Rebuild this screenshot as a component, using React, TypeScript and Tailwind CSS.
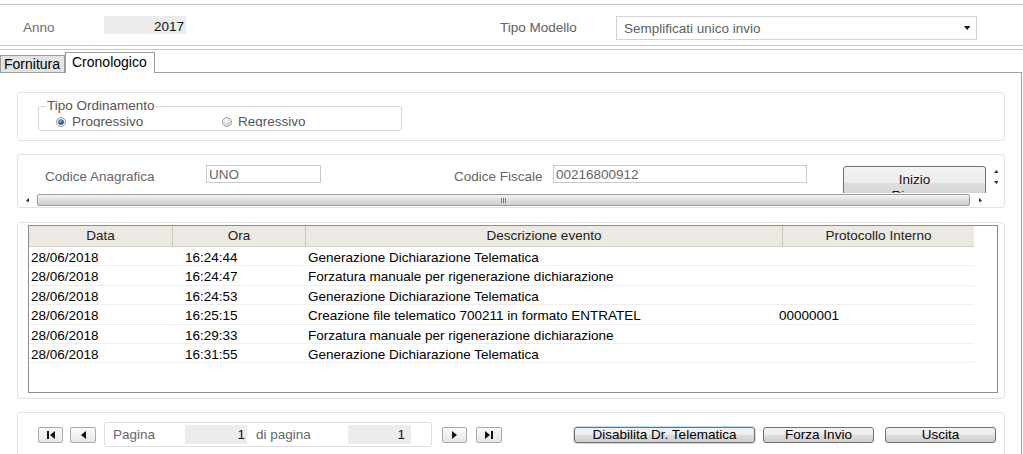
import React from 'react';

const ROWS = [
  ['28/06/2018', '16:24:44', 'Generazione Dichiarazione Telematica', ''],
  ['28/06/2018', '16:24:47', 'Forzatura manuale per rigenerazione dichiarazione', ''],
  ['28/06/2018', '16:24:53', 'Generazione Dichiarazione Telematica', ''],
  ['28/06/2018', '16:25:15', 'Creazione file telematico 700211 in formato ENTRATEL', '00000001'],
  ['28/06/2018', '16:29:33', 'Forzatura manuale per rigenerazione dichiarazione', ''],
  ['28/06/2018', '16:31:55', 'Generazione Dichiarazione Telematica', ''],
];

function Tri({ dir, size = 5, color = '#111' }: { dir: 'l' | 'r' | 'u' | 'd'; size?: number; color?: string }) {
  const pts = {
    l: '5,0 5,8 0,4',
    r: '0,0 0,8 5,4',
    u: '0,5 8,5 4,0',
    d: '0,0 8,0 4,5',
  }[dir];
  const vb = dir === 'l' || dir === 'r' ? '0 0 5 8' : '0 0 8 5';
  const w = dir === 'l' || dir === 'r' ? size : size * 1.6;
  const h = dir === 'l' || dir === 'r' ? size * 1.6 : size;
  return (
    <svg width={w} height={h} viewBox={vb}>
      <polygon points={pts} fill={color} />
    </svg>
  );
}

function Radio({ checked }: { checked?: boolean }) {
  return (
    <svg width="10" height="10" viewBox="0 0 10 10" className="shrink-0">
      <defs>
        <radialGradient id={checked ? 'rOn' : 'rOff'} cx="40%" cy="35%" r="65%">
          <stop offset="0%" stopColor={checked ? '#9cc3e6' : '#ffffff'} />
          <stop offset="60%" stopColor={checked ? '#2c5b86' : '#e2e2e2'} />
          <stop offset="100%" stopColor={checked ? '#1b3a58' : '#c8c8c8'} />
        </radialGradient>
      </defs>
      <circle cx="5" cy="5" r="4.5" fill="#f4f4f4" stroke="#9a9a9a" strokeWidth="1" />
      <circle cx="5" cy="5" r={checked ? 2.8 : 3.2} fill={`url(#${checked ? 'rOn' : 'rOff'})`} />
    </svg>
  );
}

const btn =
  'h-[16px] border border-[#707070] rounded-[3px] bg-[linear-gradient(#f3f3f3_0%,#ebebeb_50%,#dddddd_51%,#cfcfcf_100%)] text-[13.5px] leading-[14px] text-black flex items-center justify-center';

const navBtn =
  'h-[16px] border border-[#a9a9a9] rounded-[2px] bg-[linear-gradient(#fbfbfb,#e6e6e6)] flex items-center justify-center gap-[1px]';

export default function App() {
  return (
    <div className="w-[1023px] h-[454px] overflow-hidden bg-white font-['Liberation_Sans',Arial,sans-serif] text-[13.5px] leading-[16px] text-black">
      {/* header */}
      <div className="mt-[4px] h-[42px] border-y border-[#c6c6c6] flex items-start">
        <span className="ml-[23px] mt-[15px] w-[81px] text-[#707070]">Anno</span>
        <div className="mt-[11px] w-[82px] h-[18px] bg-[#ececec] text-right pr-[2px] leading-[21px] text-[#111]">2017</div>
        <span className="ml-[314px] mt-[15px] w-[116px] text-[#606060]">Tipo Modello</span>
        <div className="mt-[11px] w-[361px] h-[24px] border border-[#d2d2d2] flex items-center pl-[7px] pr-[6px] text-[#606060]">
          <span className="flex-1 pt-[1px]">Semplificati unico invio</span>
          <Tri dir="d" size={4} />
        </div>
      </div>
      <div className="mt-[3px] border-t border-[#c6c6c6]" />

      {/* tabs */}
      <div className="w-[1022px] h-[23px] flex items-end border-b border-[#a0a0a0]">
        <div className="w-[65px] h-[17px] border border-b-0 border-[#9c9c9c] bg-[#e3e3e3] text-[14px] leading-[17px] pl-[3px]">
          Fornitura
        </div>
        <div className="-mb-px w-[90px] h-[21px] border border-b-0 border-[#9c9c9c] bg-white text-[14px] leading-[19px] pl-[6px]">
          Cronologico
        </div>
      </div>

      {/* tab content */}
      <div className="w-[1022px] h-[400px] border-r border-[#a0a0a0] pl-[17px] pr-[16px] pt-[19px]">
        {/* ordinamento */}
        <div className="h-[49px] border border-[#e2e2e2] rounded-[3px]">
          <div className="relative ml-[20px] mt-[13px] w-[364px] h-[25px] border border-[#d8d8d8] rounded-[3px]">
            <span className="absolute left-[7px] top-[-9px] bg-white px-[1px] text-[#555]">Tipo Ordinamento</span>
            <div className="mt-[7px] h-[13px] overflow-hidden flex items-start text-[#555] leading-[15px]">
              <div className="ml-[17px] w-[166px] flex items-start">
                <span className="mt-[3px]"><Radio checked /></span>
                <span className="ml-[6px]">Progressivo</span>
              </div>
              <div className="flex items-start">
                <span className="mt-[3px]"><Radio /></span>
                <span className="ml-[6px]">Regressivo</span>
              </div>
            </div>
          </div>
        </div>

        {/* ricerca */}
        <div className="mt-[13px] h-[54px] border border-[#e2e2e2] rounded-[3px] flex flex-col">
          <div className="h-[38px] flex">
            <div className="flex-1 overflow-hidden pt-[10px]">
              <div className="flex items-start">
                <span className="ml-[27px] mt-[4px] w-[161px] text-[#666]">Codice Anagrafica</span>
                <div className="w-[115px] h-[18px] border border-[#c9c9c9] pl-[2px] leading-[17px] text-[#666]">UNO</div>
                <span className="ml-[133px] mt-[4px] w-[99px] text-[#666]">Codice Fiscale</span>
                <div className="w-[254px] h-[18px] border border-[#c9c9c9] pl-[2px] leading-[17px] text-[#666]">00216800912</div>
                <div className="ml-[36px] mt-[1px] w-[143px] h-[34px] border border-[#707070] rounded-[3px] bg-[linear-gradient(#f3f3f3_0%,#ececec_50%,#dedede_51%,#d2d2d2_100%)] pt-[5px] text-center text-[#111] leading-[16px]">
                  <div>Inizio</div>
                  <div>Ricerca</div>
                </div>
              </div>
              <div className="flex mt-[4px]">
                <div className="ml-[188px] w-[115px] h-[18px] border border-[#c9c9c9]" />
                <div className="ml-[232px] w-[254px] h-[18px] border border-[#c9c9c9]" />
              </div>
            </div>
            <div className="w-[16px] flex flex-col items-center pt-[15px] gap-[8px]">
              <Tri dir="u" size={3} color="#333" />
              <Tri dir="d" size={3} color="#333" />
            </div>
          </div>
          <div className="h-[14px] flex items-center">
            <div className="w-[19px] flex justify-center">
              <Tri dir="l" size={3} color="#333" />
            </div>
            <div className="w-[933px] h-[12px] border border-[#9c9c9c] rounded-[2px] bg-[linear-gradient(#f4f4f4,#dadada_60%,#cdcdcd)] flex items-center justify-center gap-[1px]">
              <span className="w-[1px] h-[5px] bg-[#777]" />
              <span className="w-[1px] h-[5px] bg-[#777]" />
              <span className="w-[1px] h-[5px] bg-[#777]" />
            </div>
            <div className="w-[20px] flex justify-center">
              <Tri dir="r" size={3} color="#333" />
            </div>
          </div>
        </div>

        {/* eventi */}
        <div className="mt-[14px] h-[177px] border border-[#e2e2e2] rounded-[3px] pt-[2px] pl-[10px]">
          <div className="w-[970px] h-[168px] border border-[#8c8c8c]">
            <div className="flex h-[21px] w-[945px] bg-[#ebe9e1] border-b border-[#d6d4cb] text-[#222]">
              <div className="w-[144px] border-r border-[#c9c7be] flex items-center justify-center">Data</div>
              <div className="w-[133px] border-r border-[#c9c7be] flex items-center justify-center">Ora</div>
              <div className="w-[477px] border-r border-[#c9c7be] flex items-center justify-center">Descrizione evento</div>
              <div className="w-[191px] flex items-center justify-center">Protocollo Interno</div>
            </div>
            {ROWS.map((r, i) => (
              <div key={i} className="flex h-[19.4px] w-[945px] border-b border-[#efefef] items-start pt-[3px]">
                <div className="w-[154px] pl-[2px]">{r[0]}</div>
                <div className="w-[123px] pl-[2px]">{r[1]}</div>
                <div className="w-[471px] pl-[2px] whitespace-nowrap">{r[2]}</div>
                <div className="w-[197px] pl-[2px]">{r[3]}</div>
              </div>
            ))}
          </div>
        </div>

        {/* navigazione */}
        <div className="mt-[13px] h-[50px] border border-[#e2e2e2] rounded-[3px]">
          <div className="mt-[9px] h-[25px] flex items-center">
            <button className={`${navBtn} ml-[20px] w-[25px]`}>
              <span className="w-[2px] h-[8px] bg-[#111]" />
              <Tri dir="l" size={5} />
            </button>
            <button className={`${navBtn} ml-[7px] w-[26px]`}>
              <Tri dir="l" size={5} />
            </button>
            <div className="ml-[8px] w-[328px] h-[25px] border border-[#dedede] rounded-[3px] flex items-center text-[#666]">
              <span className="ml-[8px] w-[72px]">Pagina</span>
              <div className="w-[62px] h-[19px] bg-[#ececec] text-right pr-[2px] leading-[19px] text-[#111]">1</div>
              <span className="ml-[9px] w-[92px]">di pagina</span>
              <div className="w-[63px] h-[19px] bg-[#ececec] text-right pr-[6px] leading-[19px] text-[#111]">1</div>
            </div>
            <button className={`${navBtn} ml-[10px] w-[25px]`}>
              <Tri dir="r" size={5} />
            </button>
            <button className={`${navBtn} ml-[9px] w-[26px]`}>
              <Tri dir="r" size={5} />
              <span className="w-[2px] h-[8px] bg-[#111]" />
            </button>
            <button className={`${btn} ml-[72px] w-[181px] border-[#3c7fb1] bg-[linear-gradient(#eef5fa_0%,#e1ecf4_50%,#cfdfeb_51%,#bfd3e2_100%)] shadow-[0_0_0_1px_#bfe0f5]`}>
              Disabilita Dr. Telematica
            </button>
            <button className={`${btn} ml-[8px] w-[111px]`}>Forza Invio</button>
            <button className={`${btn} ml-[11px] w-[111px]`}>Uscita</button>
          </div>
        </div>
      </div>
    </div>
  );
}
